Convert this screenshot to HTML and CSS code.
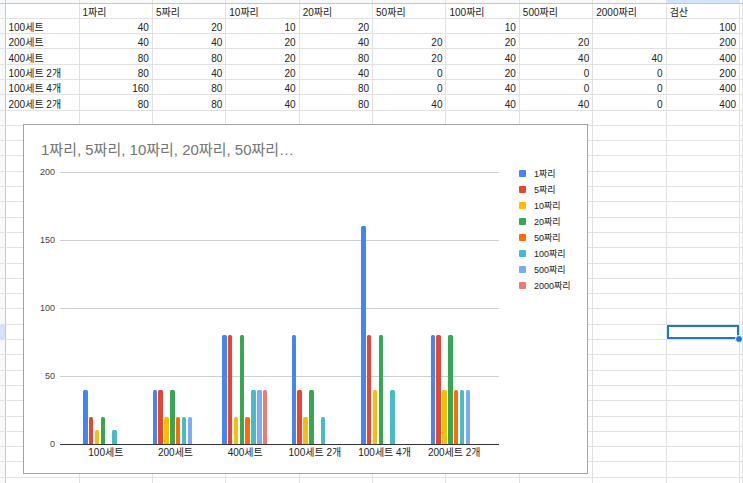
FILE: index.html
```html
<!DOCTYPE html>
<html lang="ko">
<head>
    <meta charset="UTF-8">
    <meta name="viewport" content="width=device-width, initial-scale=1.0">
    <title>세트 계산</title>
    <link rel="stylesheet" href="styles.css">
</head>
<body>
    <!-- Sheet grid -->
    <table class="sheet">
        <colgroup>
            <col class="col-rh"><col class="col-a">
            <col class="col-n"><col class="col-n"><col class="col-n"><col class="col-n"><col class="col-n">
            <col class="col-n"><col class="col-n"><col class="col-n"><col class="col-n">
            <col class="col-k">
        </colgroup>
        <tbody id="sheet-body">
            <tr class="col-head"><td class="rh"></td><td></td><td></td><td></td><td></td><td></td><td></td><td></td><td></td><td></td><td class="hl"></td><td></td></tr>
            <tr><td class="rh"></td><td></td><td>1짜리</td><td>5짜리</td><td>10짜리</td><td>20짜리</td><td>50짜리</td><td>100짜리</td><td>500짜리</td><td>2000짜리</td><td>검산</td><td></td></tr>
            <tr><td class="rh"></td><td>100세트</td><td class="num">40</td><td class="num">20</td><td class="num">10</td><td class="num">20</td><td class="num"></td><td class="num">10</td><td class="num"></td><td class="num"></td><td class="num">100</td><td></td></tr>
            <tr><td class="rh"></td><td>200세트</td><td class="num">40</td><td class="num">40</td><td class="num">20</td><td class="num">40</td><td class="num">20</td><td class="num">20</td><td class="num">20</td><td class="num"></td><td class="num">200</td><td></td></tr>
            <tr><td class="rh"></td><td>400세트</td><td class="num">80</td><td class="num">80</td><td class="num">20</td><td class="num">80</td><td class="num">20</td><td class="num">40</td><td class="num">40</td><td class="num">40</td><td class="num">400</td><td></td></tr>
            <tr><td class="rh"></td><td>100세트 2개</td><td class="num">80</td><td class="num">40</td><td class="num">20</td><td class="num">40</td><td class="num">0</td><td class="num">20</td><td class="num">0</td><td class="num">0</td><td class="num">200</td><td></td></tr>
            <tr><td class="rh"></td><td>100세트 4개</td><td class="num">160</td><td class="num">80</td><td class="num">40</td><td class="num">80</td><td class="num">0</td><td class="num">40</td><td class="num">0</td><td class="num">0</td><td class="num">400</td><td></td></tr>
            <tr><td class="rh"></td><td>200세트 2개</td><td class="num">80</td><td class="num">80</td><td class="num">40</td><td class="num">80</td><td class="num">40</td><td class="num">40</td><td class="num">40</td><td class="num">0</td><td class="num">400</td><td></td></tr>
        </tbody>
    </table>

    <!-- Chart floating over the sheet -->
    <div class="chart">
        <div class="chart-title">1짜리, 5짜리, 10짜리, 20짜리, 50짜리…</div>
        <div class="chart-body">
            <div class="plot-area">
                <div class="plot-row">
                    <div class="axis">
                        <span>200</span><span>150</span><span>100</span><span>50</span><span>0</span>
                    </div>
                    <div class="plot">
                        <div class="gridlines"><div></div><div></div><div></div><div></div></div>
                        <div class="bars" id="bars"></div>
                    </div>
                </div>
                <div class="xlabels" id="xlabels"></div>
            </div>
            <ul class="legend" id="legend"></ul>
        </div>
    </div>

    <script>
        document.addEventListener("DOMContentLoaded", function () {
            const series = ["1짜리", "5짜리", "10짜리", "20짜리", "50짜리", "100짜리", "500짜리", "2000짜리"];
            const colors = ["#4285f4", "#ea4335", "#fbbc04", "#34a853", "#ff6d01", "#46bdc6", "#7baaf7", "#f07b72"];
            const data = [
                ["100세트", [40, 20, 10, 20, 0, 10, 0, 0]],
                ["200세트", [40, 40, 20, 40, 20, 20, 20, 0]],
                ["400세트", [80, 80, 20, 80, 20, 40, 40, 40]],
                ["100세트 2개", [80, 40, 20, 40, 0, 20, 0, 0]],
                ["100세트 4개", [160, 80, 40, 80, 0, 40, 0, 0]],
                ["200세트 2개", [80, 80, 40, 80, 40, 40, 40, 0]]
            ];
            const scale = 272 / 200;

            // Empty sheet rows below the data
            const body = document.getElementById("sheet-body");
            for (let r = 9; r <= 33; r++) {
                const row = document.createElement("tr");
                for (let c = 0; c < 12; c++) {
                    const cell = document.createElement("td");
                    if (c === 0) cell.className = r === 23 ? "rh hl" : "rh";
                    if (c === 10 && r === 23) cell.className = "active";
                    row.appendChild(cell);
                }
                body.appendChild(row);
            }

            // Bars and x labels
            const bars = document.getElementById("bars");
            const xlabels = document.getElementById("xlabels");
            data.forEach(function (item) {
                const group = document.createElement("div");
                group.className = "group";
                item[1].forEach(function (value, i) {
                    const bar = document.createElement("div");
                    bar.className = "bar";
                    bar.style.height = (value * scale) + "px";
                    bar.style.background = colors[i];
                    group.appendChild(bar);
                });
                bars.appendChild(group);

                const label = document.createElement("span");
                label.textContent = item[0];
                xlabels.appendChild(label);
            });

            // Legend
            const legend = document.getElementById("legend");
            series.forEach(function (name, i) {
                const li = document.createElement("li");
                const swatch = document.createElement("i");
                swatch.style.background = colors[i];
                li.appendChild(swatch);
                li.appendChild(document.createTextNode(name));
                legend.appendChild(li);
            });
        });
    </script>
</body>
</html>
```
FILE: styles.css
```css
body {
    margin: 0;
    height: 483px;
    overflow: hidden;
    position: relative;
    background: #fff;
    color: #222;
    font-family: "Liberation Sans", "Noto Sans CJK KR", sans-serif;
}

/* Sheet */
.sheet {
    border-collapse: collapse;
    table-layout: fixed;
    width: 743px;
    font-size: 10px;
}
.col-rh { width: 5px; }
.col-a { width: 74px; }
.col-n { width: 73.4px; }
.sheet tr {
    height: 15.3px;
}
.sheet td {
    padding: 0 3px;
    line-height: 11px;
    vertical-align: bottom;
    white-space: nowrap;
    overflow: visible;
    border-right: 1px solid #e2e2e2;
    border-bottom: 1px solid #e2e2e2;
}
.sheet .num {
    text-align: right;
}
.sheet .rh {
    padding: 0;
    background: #f8f9fa;
    border-right: 1px solid #c4c7c5;
}
.sheet .col-head {
    height: 3px;
}
.sheet .col-head td {
    padding: 0;
    background: #f8f9fa;
    border-bottom: 1px solid #c4c7c5;
}
.sheet .hl,
.sheet .col-head .hl {
    background: #d3e3fd;
}
.sheet .active {
    position: relative;
    box-shadow: inset 0 0 0 2px #1a73e8;
}
.sheet .active::after {
    content: "";
    position: absolute;
    right: -4px;
    bottom: -4px;
    width: 6px;
    height: 6px;
    border-radius: 50%;
    background: #1a73e8;
    border: 1px solid #fff;
}

/* Chart */
.chart {
    position: absolute;
    left: 23px;
    top: 124px;
    width: 563px;
    height: 348px;
    border: 1px solid #a3a3a3;
    background: #fff;
}
.chart-title {
    box-sizing: border-box;
    height: 47px;
    padding: 16px 0 0 17px;
    font-size: 15px;
    line-height: 18px;
    color: #757575;
}
.chart-body {
    display: flex;
}
.plot-row {
    display: flex;
}
.axis {
    width: 31px;
    height: 272px;
    display: flex;
    flex-direction: column;
    justify-content: space-between;
    text-align: right;
    font-size: 9px;
    color: #444;
}
.axis span {
    height: 0;
    line-height: 0;
}
.plot {
    width: 439px;
    margin-left: 5px;
    display: grid;
}
.gridlines,
.bars {
    grid-area: 1 / 1;
}
.gridlines {
    border-bottom: 1px solid #333;
}
.gridlines div {
    box-sizing: border-box;
    height: 68px;
    border-top: 1px solid #d0d0d0;
}
.bars {
    height: 272px;
    padding: 0 11px;
    display: flex;
}
.group {
    flex: 1;
    display: flex;
    justify-content: center;
    align-items: flex-end;
    gap: 1.45px;
}
.bar {
    width: 4.4px;
    border-radius: 1.5px 1.5px 0 0;
}
.xlabels {
    display: flex;
    margin: 2px 10px 0 47px;
    font-size: 10px;
    line-height: 12px;
    color: #222;
}
.xlabels span {
    flex: 1;
    text-align: center;
    white-space: nowrap;
}
.legend {
    list-style: none;
    margin: -7px 0 0 20px;
    padding: 0;
    font-size: 9px;
    color: #222;
}
.legend li {
    height: 16px;
    display: flex;
    align-items: center;
}
.legend i {
    width: 7px;
    height: 7px;
    border-radius: 1px;
    margin-right: 8px;
}
```
